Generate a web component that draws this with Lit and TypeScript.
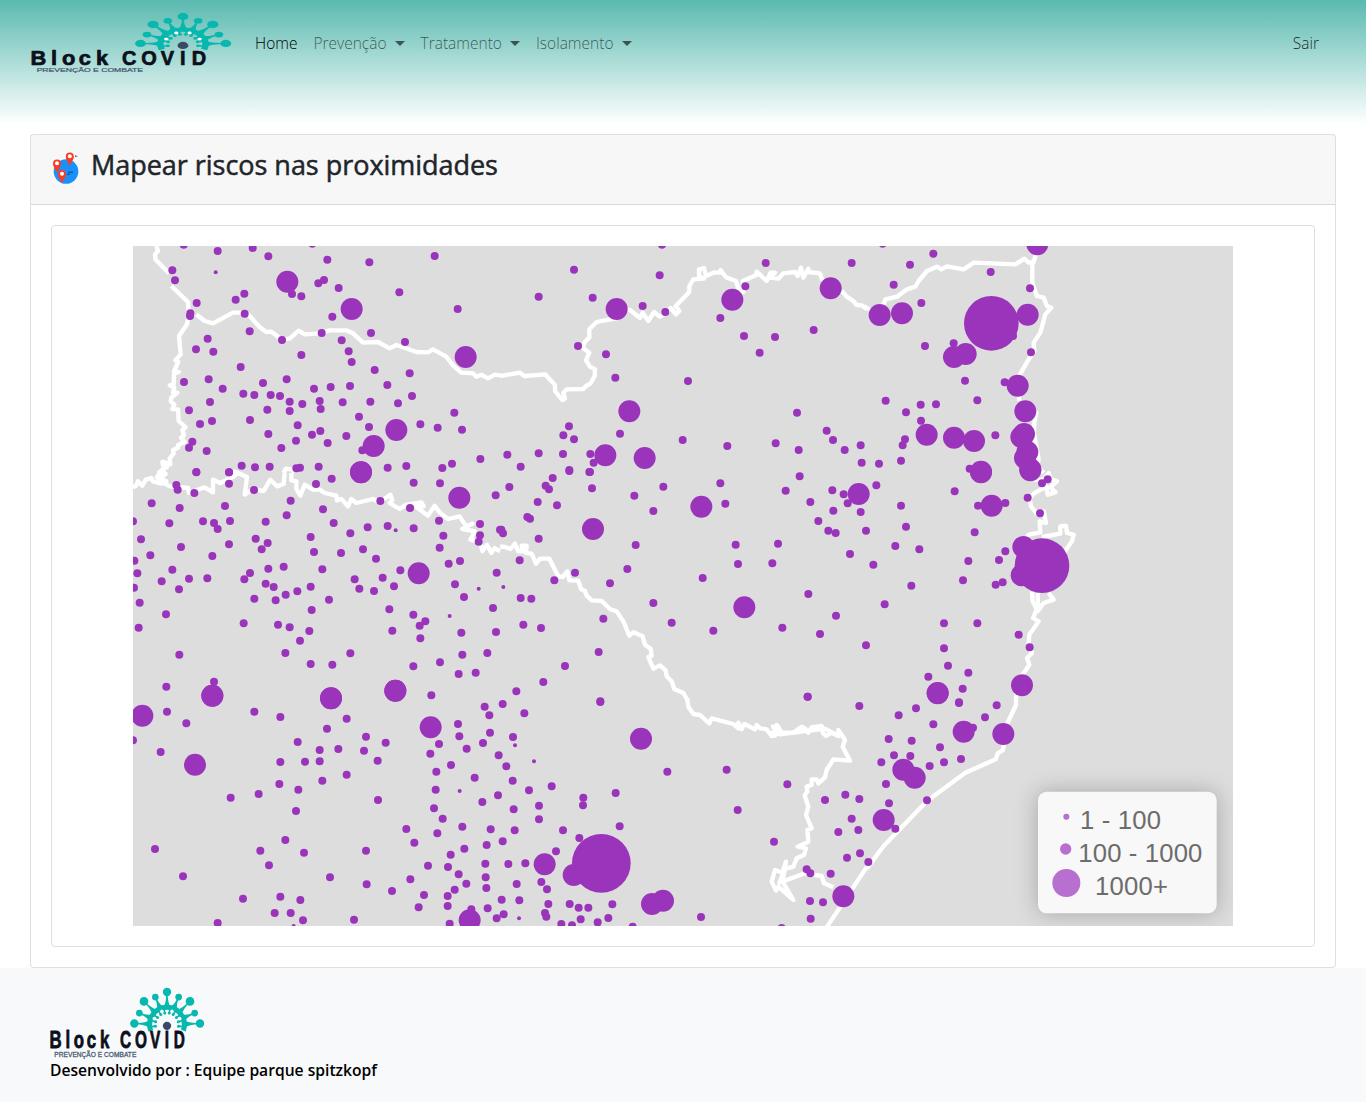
import { LitElement, html, css, svg } from "lit";
import { customElement } from "lit/decorators.js";

interface Sector {
  x: number;
  y: number;
  borders: string[];
  large: string;
  medium: string;
  small?: string;
  huge?: [number, number, number][];
}

// Map units are thirds of a pixel; every sector lists points relative to its own origin.
const SECTORS: Sector[] = [
  {
    x: 0, y: 0,
    borders: [
      "70,0 75,15 66,25 67,40 108,82",
      "115,120 165,168 167,205 162,235 138,270 143,325 127,343 136,348 123,375 138,378 123,382 122,415 110,418 124,425 120,440 133,440 115,455 113,466 124,475 118,489 135,490 137,525 158,544 148,552 153,568 144,575 155,588 135,597 135,605 120,612 122,622 110,638 112,655 88,647 90,658 102,664 85,672 95,681 72,680",
      "190,205 215,225 240,232 300,200 320,200 345,205 380,243 400,258 415,257 445,280 470,278 497,254 515,265 560,262 590,253 640,253 660,262 690,290 735,288 770,307 790,297 850,318 885,319 900,310 940,332 960,358 985,380 1020,382 1030,392 1045,386 1065,397 1085,386 1101,388",
      "452,681 458,668 475,670 485,678", "300,675 315,681",
    ],
    large: "463,107 656,189 998,333 790,552 722,600 684,679",
    medium: "152,-4 254,15 359,6 406,31 583,41 709,49 905,30 538,-7 118,73 126,103 191,171 172,202 171,210 334,143 308,161 335,203 477,144 505,151 556,112 573,102 617,126 598,212 799,139 974,189 350,256 224,278 189,310 241,317 447,282 566,261 714,261 626,283 647,316 816,288 505,327 656,348 323,363 725,372 830,382 153,408 227,400 269,428 390,411 461,400 331,443 364,447 413,447 441,450 470,467 543,428 593,423 651,420 763,417 837,450 231,468 168,493 403,491 470,495 508,474 560,465 563,489 629,469 712,467 795,472 678,512 964,500 201,534 237,525 351,522 494,538 708,543 862,535 914,545 987,551 562,555 537,566 406,564 640,570 584,591 489,584 178,587 168,605 221,615 445,606 688,613 326,659 366,664 410,662 490,667 501,665 557,662 764,665 820,660 928,666 957,653 1042,639 190,679 288,679",
    small: "248,79",
  },
  {
    x: 1101, y: 0,
    borders: [
      "0,390 60,380 73,390 135,385 165,417 165,435 187,462 195,458 190,440 200,430 250,429 258,420 272,412 284,390 285,370 270,362 258,343 268,320 248,305 255,287 268,275 268,250 290,228 310,224 350,217",
      "350,190 390,192 420,216 428,200 445,225 462,198 480,212 500,200 512,186 528,205 538,195 527,180 568,138 568,120 580,100 612,98 597,90 597,70 612,66 618,90 640,80 660,80 662,72 678,94 708,105 714,125 730,138 728,105 768,88 770,77 800,105 812,80 825,80 808,95 835,98 850,82 885,78 893,90 903,65 910,95 925,68 925,78 960,82 966,100 990,118",
      "1025,135 1040,152 1060,165 1070,177 1085,178 1101,190",
    ],
    large: "350,189 697,161 992,127 388,496 316,628 434,636",
    medium: "486,-4 222,71 479,88 797,51 1055,51 116,152 278,155 428,180 496,198 736,121 661,216 732,270 779,320 825,273 941,252 234,300 318,325 346,395 564,405 891,500 207,541 190,568 222,580 360,563 548,582 682,600 827,592 896,612 980,554 999,582 1034,612 1082,598 1085,650 22,626 62,662 116,622 189,624 271,624 281,650 208,672 270,678",
  },
  {
    x: 2202, y: 0,
    borders: [
      "-10,180 15,195 50,175 55,160 90,152 120,130 145,122 155,105 180,75 210,62 223,70 240,61 290,70 320,50 445,55 472,38 485,50 500,48 508,20",
      "496,50 496,110 510,150 530,155 540,180 553,185 535,205 520,260 500,290 502,315 485,340 450,400 457,465",
      "485,480 508,500 503,525 500,560 515,640 510,660 530,681",
    ],
    large: "511,-5 38,207 105,202 482,206 261,333 296,324 452,419 475,496 179,566 261,575 321,585 471,564 463,573 481,618 474,636 490,673 342,679",
    medium: "47,-7 199,23 129,56 80,116 163,171 371,78 489,127 174,300 260,292 438,270 492,319 294,404 413,409 331,463 56,464 161,476 207,475 117,499 162,524 385,568 114,580 107,598 102,644 36,653 308,668",
    huge: [[373, 232, 82]],
  },
  {
    x: 0, y: 681,
    borders: [
      "-4,42 8,40 15,25 28,38 38,20 55,15 60,25 85,32 100,25 72,12 82,0 98,3 75,20 110,40 165,45 168,60 215,43 240,58 240,20 262,30 300,12 315,0 342,12 335,65 360,48 392,54 412,20 432,40 452,33 455,0",
      "475,0 475,22 490,25 490,48 502,68 515,35 540,50 560,50 575,60 610,68 612,82 625,78 645,100 655,78 670,90 720,78 740,88 772,65 778,82 770,90 800,108 820,95 865,88 872,100 850,102 885,128 905,98 920,118 945,138 980,130 1000,160 1018,152 988,168 1025,175 1012,200 1042,208 1048,235 1062,215 1075,240 1085,225 1101,235",
    ],
    large: "684,-2 979,74 857,301 238,668 594,676 787,653",
    medium: "190,-3 288,-2 130,36 134,50 184,60 56,91 140,105 276,99 288,32 363,51 473,83 461,127 549,33 596,17 570,109 742,84 831,105 842,29 921,31 1088,67 0,145 109,151 210,145 243,150 254,168 291,144 398,146 602,150 704,163 764,159 842,166 918,143 1041,153 1041,187 1037,206 931,188 652,181 533,192 24,199 144,222 288,214 368,197 404,210 386,229 543,237 624,240 690,229 729,257 920,224 947,272 981,264 52,247 4,263 13,301 3,344 118,290 86,325 168,317 223,316 138,349 238,249 334,319 351,300 406,287 452,281 398,332 422,342 458,365 493,355 533,341 428,382 364,377 568,289 665,319 679,347 723,354 749,314 783,340 802,292 966,334 993,372 1091,299 1101,170 20,389 99,424 17,464 588,380 536,411 769,409 841,425 877,445 860,458 862,496 778,473 1080,405 1089,477 985,479 332,451 435,455 470,463 529,474 501,503 457,540 533,573 598,575 652,541 139,545 100,641 243,626 841,580 921,568 988,545 977,603 1028,599 1063,540 895,667",
    small: "788,172 1037,347 950,429",
  },
  {
    x: 1101, y: 681,
    borders: [
      "0,220 15,222 32,228 45,212 55,235 68,235 65,218 80,218 78,240 95,242 108,272 120,257 148,257 175,310 188,312 202,295 208,322 235,323 243,348 255,354 260,368 275,382 305,384 330,408 350,415 370,445 388,488 400,478 428,490 435,515 452,527 455,548 445,552 460,587 480,577 497,592 500,610 515,625 523,648 550,660 565,685",
    ],
    large: "279,168 604,101 733,403 1076,63",
    medium: "208,-6 268,-3 28,42 158,15 137,38 147,49 276,46 403,68 490,41 460,114 661,31 676,92 899,10 857,53 931,87 997,52 1031,64 1043,91 1000,113 1082,117 955,144 985,173 1007,180 1098,173 1050,243 113,87 171,97 82,132 90,137 4,170 9,181 116,197 59,262 163,322 225,299 330,331 382,288 407,216 707,215 714,273 817,271 834,212 608,315 62,375 94,377 460,390 515,449 310,437 70,455 123,465 640,473 296,537 195,579 130,627 49,655 301,685 925,363 1008,428 847,464 960,483 1098,517 923,671",
    small: "10,342",
  },
  {
    x: 2202, y: 681,
    borders: [
      "500,20 530,20 545,0 550,18 570,25 550,42 565,58 542,65 538,40 500,62 488,75 492,100 512,125 530,115 537,150 518,145 520,178 485,185 470,205",
      "525,192 580,182 580,160 597,158 600,180 620,185 615,205 590,240",
      "495,355 497,385 512,415 530,390 560,380 545,360", "512,360 513,400 498,435 515,445 487,485 485,510 495,540 480,555 487,575 450,630 447,681",
    ],
    large: "342,-4 490,-11 374,98 469,222 464,307 465,637 212,660 475,290",
    medium: "28,37 102,98 117,161 263,55 333,98 415,90 482,74 525,31 542,19 519,121 323,178 85,219 157,229 415,235 396,261 304,264 19,275 288,322 386,335 407,328 133,338 53,394 231,451 331,451 455,485 488,523 231,526 243,578 304,599 184,611 287,647 276,688",
    huge: [[525, 278, 82]],
  },
  {
    x: 0, y: 1362,
    borders: [],
    large: "28,47 238,-13 594,-5 186,194 893,82 1010,661 787,-28",
    medium: "0,121 102,35 160,70 83,156 364,35 442,51 494,126 582,86 641,56 560,150 616,147 699,110 693,152 758,128 734,182 442,186 516,185 560,184 568,242 641,224 439,252 496,269 377,282 293,293 489,333 735,300 918,132 892,161 975,72 979,109 1055,20 1069,46 1071,98 1050,129 1001,146 954,195 910,215 1025,233 908,269 1048,306 1095,286 903,325 929,356 1097,166 820,387 913,400 988,380 1073,388 844,428 66,447 457,420 382,452 513,458 699,452 994,446 1061,435 953,464 408,496 150,529 591,532 885,497 945,501 977,523 1057,491 1058,532 1000,551 1060,564 965,569 832,538 701,553 777,573 873,585 944,588 330,596 442,590 502,600 425,639 473,639 510,661 663,659 857,622 944,618 1064,625 1015,628 1091,655 950,671 254,669",
    small: "980,273 482,678",
  },
  {
    x: 1101, y: 1362,
    borders: [
      "562,0 565,20 580,42 600,45 628,70 635,55 700,72 715,85 715,68 725,88 733,72 765,88 770,75 780,85 800,88 815,108 825,107 830,75 845,98 880,98 905,80 915,85 925,98 935,82 965,78 968,98 978,108 995,98 1015,108 1015,90 1035,120 1028,140 1050,182 1000,178 980,210 975,232 955,250 950,238 935,238 935,255 920,260 922,275 914,285 925,320 918,345 935,385 922,390 925,425 893,440 918,445 912,465 890,475 880,500 850,508 858,485 848,545 880,600 835,560 828,572 815,545 825,510 850,520 838,548 915,520 965,528 972,550 1000,562",
      "1101,500 978,685",
      "813,80 835,80 818,98 840,103 975,86 1010,105",
    ],
    large: "423,116 134,493 221,525 456,612 489,602 1030,589",
    medium: "8,12 73,40 301,6 39,111 19,199 38,242 87,271 155,259 250,293 249,316 347,279 502,215 680,209 862,253 713,330 822,425 41,328 117,317 117,358 44,391 189,391 238,414 359,379 8,424 168,454 25,492 76,490 50,552 124,546 141,568 5,599 58,601 145,612 11,643 135,639 139,650 209,612 236,623 265,623 337,613 184,672 216,676 242,658 293,667 325,654 398,680 603,651 1078,18 975,300 1036,284 1078,297 1055,356 1015,396 1075,390 1041,473 1080,460 920,508 931,520 992,521 930,603 969,607 932,656 845,684 923,-10",
    small: "45,136 102,184 57,655",
    huge: [[304, 490, 88]],
  },
  {
    x: 2202, y: 1362,
    borders: ["447,0 447,15 420,72 408,150 392,160 386,178 295,218 180,303 50,438 0,505"],
    large: "212,-20 290,95 409,102 109,209 143,233 50,360",
    medium: "276,9 389,16 147,25 95,46 199,73 318,83 354,52 65,117 134,122 219,142 81,166 130,168 43,187 188,198 231,187 282,177 57,252 66,310 180,301 85,386 4,486",
  },
];

const dots = (points: string | undefined, r: number) =>
  (points ?? "").split(" ").filter(Boolean).map((p) => {
    const [cx, cy] = p.split(",");
    return svg`<circle cx=${cx} cy=${cy} r=${r}></circle>`;
  });

const SPIKES: [number, number, number][] = [
  [313, 160, 12.5], [328, 129, 10], [342, 94, 13], [376, 81, 10], [411, 66, 12.5],
  [446, 81, 10], [480, 94, 13], [494, 129, 10], [510, 160, 12.5],
];

@customElement("brand-logo")
class BrandLogo extends LitElement {
  static styles = css`
    :host { display: block; }
    svg { display: block; width: 100%; height: 100%; overflow: visible; }
    .teal { fill: #06b8ae; }
    .ring { fill: none; stroke: #06b8ae; stroke-width: 15; }
    .spoke { stroke: #06b8ae; stroke-width: 5; }
    .gap { fill: #fff; }
    .core { fill: #3b4a63; }
    .name { font: bold 72px "Liberation Sans", sans-serif; fill: #0b101b; stroke: #0b101b; stroke-width: 2.5; stroke-linejoin: round; }
    .tag { font: 19px "Liberation Sans", sans-serif; fill: #4b5b75; stroke: #4b5b75; stroke-width: 0.8; }
  `;
  render() {
    const cx = 411, cy = 163;
    return html`<svg viewBox="60 54 462 209" preserveAspectRatio="none">
      ${SPIKES.map(([x, y, r]) => {
        const d = Math.hypot(x - cx, y - cy);
        const ux = (x - cx) / d, uy = (y - cy) / d;
        const bx = cx + ux * 55, by = cy + uy * 55;
        const mx = cx + ux * 63, my = cy + uy * 63;
        const path = `M${bx - uy * 10},${by + ux * 10} Q${mx - uy * 2},${my + ux * 2} ${x - uy * 2},${y + ux * 2}
          L${x + uy * 2},${y - ux * 2} Q${mx + uy * 2},${my - ux * 2} ${bx + uy * 10},${by - ux * 10}Z`;
        return svg`<path class="teal" d=${path}></path><circle class="teal" cx=${x} cy=${y} r=${r}></circle>`;
      })}
      <path class="ring" d="M362,181 A52,52 0 1 1 460,181"></path>
      ${[-8, 14, 36, 58, 79, 101, 122, 144, 166, 188].map((a) => {
        const t = (a * Math.PI) / 180;
        const c = Math.cos(t), s = Math.sin(t);
        return svg`<line class="spoke" x1=${cx + c * 47} y1=${cy - s * 47} x2=${cx + c * 36} y2=${cy - s * 36}></line>
          <circle class="teal" cx=${cx + c * 35} cy=${cy - s * 35} r="4.5"></circle>`;
      })}
      ${[25, 69, 111, 155].map((a) => {
        const t = (a * Math.PI) / 180;
        return svg`<circle class="gap" cx=${cx + Math.cos(t) * 43} cy=${cy - Math.sin(t) * 43} r="4.5"></circle>`;
      })}
      <circle class="core" cx="411" cy="167" r="12.5"></circle>
      <text class="name" transform="translate(0 234) scale(.7 1)" x="84 152 188 243 300">Block</text>
      <text class="name" transform="translate(0 234) scale(.64 1)" x="422 492 562 632 674">COVID</text>
      <text class="tag" x="73" y="259" textLength="246" lengthAdjust="spacingAndGlyphs">PREVENÇÃO E COMBATE</text>
    </svg>`;
  }
}

@customElement("risk-map")
class RiskMap extends LitElement {
  static styles = css`
    :host { display: block; width: 1100px; height: 680px; }
    svg { display: block; width: 100%; height: 100%; }
    .land { fill: #ddd; }
    .border { fill: none; stroke: #fff; stroke-width: 13; stroke-linejoin: round; }
    .cases { fill: #9a35bb; }
    .legend { fill: #f8f8f8; filter: drop-shadow(0 0 34px rgba(0, 0, 0, 0.25)); }
    .key { fill: #b76fd0; }
    .label { font: 77px "Liberation Sans", Arial, sans-serif; fill: #6c6c6c; }
  `;
  render() {
    return html`<svg viewBox="0 0 3300 2040">
      <rect class="land" width="3300" height="2040"></rect>
      ${SECTORS.map((s) => svg`<g transform="translate(${s.x} ${s.y})">
        ${s.borders.map((b) => svg`<polyline class="border" points=${b}></polyline>`)}</g>`)}
      ${SECTORS.map((s) => svg`<g class="cases" transform="translate(${s.x} ${s.y})">
        ${dots(s.large, 33)}${dots(s.medium, 12)}${dots(s.small, 6)}
        ${(s.huge ?? []).map(([x, y, r]) => svg`<circle cx=${x} cy=${y} r=${r}></circle>`)}</g>`)}
      <g transform="translate(2202 1362)">
        <rect class="legend" x="513" y="275" width="536" height="365" rx="26"></rect>
        <circle class="key" cx="598" cy="350" r="9"></circle>
        <circle class="key" cx="596" cy="447" r="17"></circle>
        <circle class="key" cx="598" cy="549" r="42"></circle>
        <text class="label" x="639" y="386" textLength="243">1 - 100</text>
        <text class="label" x="634" y="485" textLength="372">100 - 1000</text>
        <text class="label" x="684" y="585" textLength="219">1000+</text>
      </g>
    </svg>`;
  }
}

@customElement("app-root")
class AppRoot extends LitElement {
  static styles = css`
    :host { display: block; color: #212529; font: 16px/24px "Open Sans", "Noto Sans", sans-serif; }
    * { box-sizing: border-box; }
    .nav { display: flex; align-items: flex-start; height: 134px; padding: 13px 39px 0 31px;
      background: linear-gradient(#5abab0, #fff 124px); }
    .nav-logo { width: 200px; height: 60px; margin-right: 16px; }
    .links { display: flex; flex: 1; padding-top: 10px; }
    .link { display: flex; align-items: center; height: 40px; padding: 0 8px; font-size: 15.5px; font-weight: 300;
      color: rgba(0, 0, 0, 0.6); white-space: nowrap; }
    .active { color: #000; }
    .exit { margin-left: auto; color: rgba(0, 0, 0, 0.85); }
    .caret { margin-left: 8px; border: 5px solid transparent; border-top-color: currentColor; border-bottom: 0; }
    .card { margin: 0 30px; border: 1px solid rgba(0, 0, 0, 0.125); border-radius: 4px; background: #fff; }
    .head { display: flex; align-items: flex-start; gap: 12px; height: 70px; padding: 12px 20px;
      background: rgba(0, 0, 0, 0.03); border-bottom: 1px solid rgba(0, 0, 0, 0.125); }
    .globe { width: 28px; height: 34px; margin-top: 4px; }
    h1 { margin: 0; font-size: 27px; line-height: 36px; font-weight: 500; white-space: nowrap;
      letter-spacing: -0.03px; -webkit-text-stroke: 0.5px currentColor; }
    .body { padding: 20px; }
    .frame { display: flex; justify-content: center; padding: 20px; border: 1px solid rgba(0, 0, 0, 0.125); border-radius: 4px; }
    footer { height: 134px; padding: 20px 50px; background: #f8f9fa; }
    .foot-logo { width: 154px; height: 70px; }
    .team { font-size: 15.65px; font-weight: 600; color: #000; white-space: nowrap; }
  `;
  render() {
    const pin = (x: number, y: number) => svg`<g transform="translate(${x} ${y})">
      <path d="M0,10 C-1.5,6 -4,4 -4,.5 A4,4 0 1 1 4,.5 C4,4 1.5,6 0,10Z" fill="#fb3b23"></path>
      <circle cy=".2" r="2" fill="#fff"></circle></g>`;
    return html`
      <nav class="nav">
        <brand-logo class="nav-logo"></brand-logo>
        <div class="links">
          <a class="link active">Home</a>
          ${["Prevenção", "Tratamento", "Isolamento"].map((t) => html`<a class="link">${t}<span class="caret"></span></a>`)}
          <a class="link exit">Sair</a>
        </div>
      </nav>
      <main class="card">
        <div class="head">
          <svg class="globe" viewBox="51 151 28 34">
            <circle cx="66" cy="171.5" r="12.3" fill="#1a91fa"></circle>
            ${pin(69.8, 156)}${pin(57, 163)}${pin(62, 173.5)}
            <path d="M68,172.2h5M67,174.2h3" stroke="#173a66" stroke-width=".9"></path>
            <path d="M75,155l3,1.3l-3,1z" fill="#777"></path>
          </svg>
          <h1>Mapear riscos nas proximidades</h1>
        </div>
        <div class="body"><div class="frame"><risk-map></risk-map></div></div>
      </main>
      <footer>
        <brand-logo class="foot-logo"></brand-logo>
        <div class="team">Desenvolvido por : Equipe parque spitzkopf</div>
      </footer>`;
  }
}
